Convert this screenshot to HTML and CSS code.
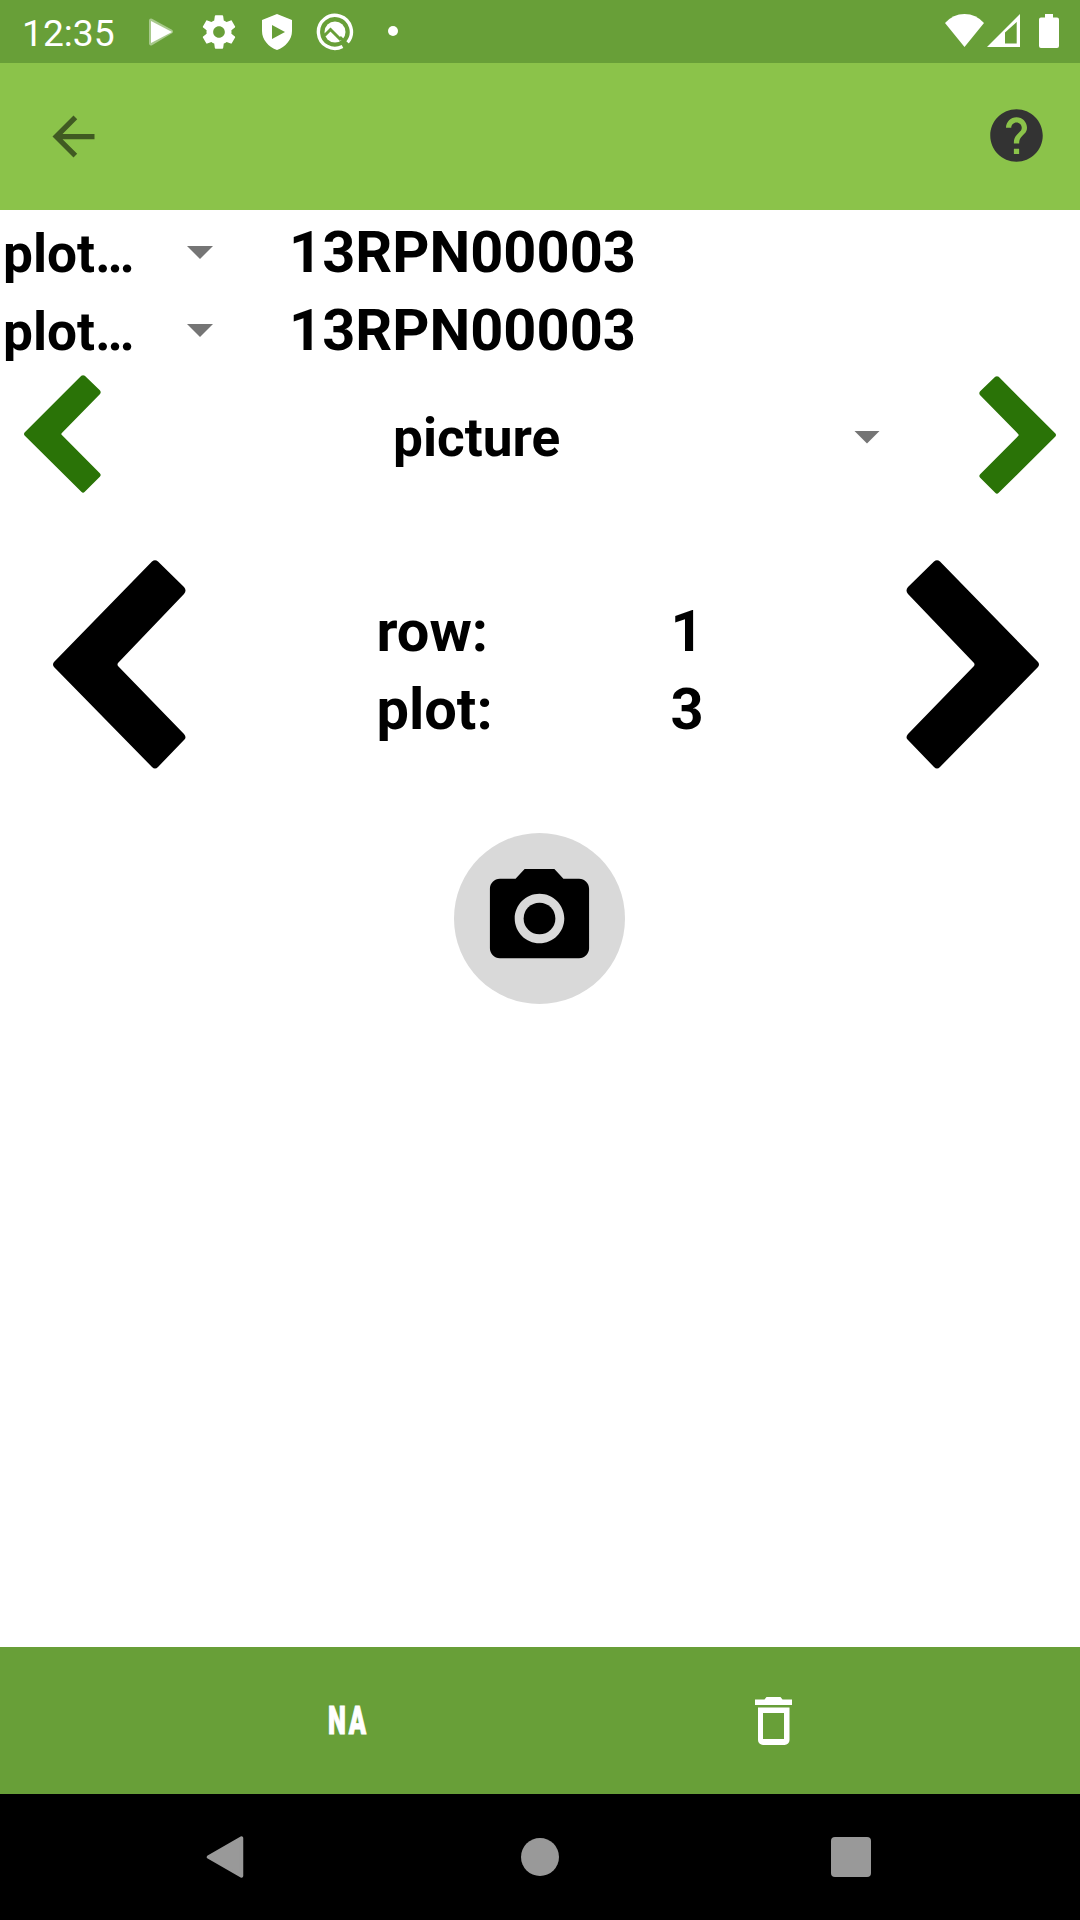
FILE: index.html
```html
<!DOCTYPE html>
<html lang="en">
<head>
<meta charset="utf-8">
<title>Collect</title>
<link rel="stylesheet" href="styles.css">
</head>
<body>
<div class="screen">
  <header class="status">
    <span class="clock">12:35</span>
    <svg class="st-play" width="26" height="30" viewBox="0 0 26 30"><path d="M3 3.500 23 14.500 3 26.500z" fill="#a8c98c" stroke="#a8c98c" stroke-width="4" stroke-linejoin="round"/><path d="M3 4 24 15 3 26z" fill="#fff"/></svg>
    <svg class="st-gear" width="40" height="40" viewBox="0 0 24 24" fill="#fff"><path d="M19.430 12.980c.04-.32.07-.64.07-.98s-.03-.66-.07-.98l2.110-1.650c.19-.15.24-.42.12-.64l-2-3.460c-.12-.22-.39-.3-.61-.22l-2.490 1c-.52-.4-1.080-.73-1.690-.98l-.38-2.650C14.460 2.180 14.250 2 14 2h-4c-.25 0-.46.18-.49.42l-.38 2.650c-.61.25-1.170.59-1.690.98l-2.490-1c-.23-.09-.49 0-.61.22l-2 3.460c-.13.22-.07.49.12.64l2.110 1.650c-.04.32-.07.65-.07.98s.03.66.07.98l-2.110 1.650c-.19.15-.24.42-.12.64l2 3.460c.12.22.39.3.61.22l2.490-1c.52.4 1.080.73 1.690.98l.38 2.650c.03.24.24.42.49.42h4c.25 0 .46-.18.49-.42l.38-2.650c.61-.25 1.170-.59 1.690-.98l2.490 1c.23.09.49 0 .61-.22l2-3.460c.12-.22.07-.49-.12-.64l-2.110-1.650zM12 15.500c-1.930 0-3.500-1.570-3.500-3.500s1.570-3.500 3.500-3.500 3.500 1.570 3.500 3.500-1.570 3.500-3.500 3.500z"/></svg>
    <svg class="st-shield" width="30" height="36" viewBox="0 0 30 36"><path fill="#fff" fill-rule="evenodd" d="M15 0 30 6v11c0 8.500-6.500 16-15 19C6.500 33 0 25.500 0 17V6zM10 11v14l13-7z"/></svg>
    <svg class="st-q" width="38" height="38" viewBox="0 0 38 38" fill="none"><path d="M26.500 33.500A16.500 16.500 0 1 1 31.500 29.500" stroke="#fff" stroke-width="3.400"/><circle cx="19" cy="19" r="10.500" fill="#fff"/><path d="M8.500 22.500 14.500 16.500 25 27" stroke="#689f38" stroke-width="3"/><path d="M24 24 34 34" stroke="#689f38" stroke-width="2.500"/></svg>
    <span class="dot"></span>
    <svg class="st-wifi" width="39" height="33" viewBox="0 0 39 33"><path fill="#fff" d="M0 9Q8 0 19.500 0T39 9L19.500 33z"/></svg>
    <svg class="st-signal" width="33" height="33" viewBox="0 0 33 33"><path fill="#fff" fill-rule="evenodd" d="M33 0v33H0zM18 18.500V29.500H29.700V8z"/></svg>
    <svg class="st-batt" width="20" height="34" viewBox="0 0 20 34"><path fill="#fff" d="M6 0h8v3.500h4a2 2 0 0 1 2 2V32a2 2 0 0 1-2 2H2a2 2 0 0 1-2-2V5.500a2 2 0 0 1 2-2h4z"/></svg>
  </header>
  <nav class="appbar">
    <svg width="63" height="63" viewBox="0 0 24 24" fill="#405a22"><path d="M20 11H7.830l5.590-5.590L12 4l-8 8 8 8 1.410-1.410L7.830 13H20v-2z"/></svg>
    <svg class="help" width="63" height="63" viewBox="0 0 24 24" fill="#333"><path d="M12 2C6.480 2 2 6.480 2 12s4.480 10 10 10 10-4.480 10-10S17.520 2 12 2zm1 17h-2v-2h2v2zm2.070-7.750l-.9.92C13.450 12.900 13 13.500 13 15h-2v-.5c0-1.100.45-2.100 1.170-2.830l1.240-1.260c.37-.36.59-.86.59-1.410 0-1.100-.9-2-2-2s-2 .9-2 2H8c0-2.210 1.790-4 4-4s4 1.790 4 4c0 .88-.36 1.680-.93 2.250z"/></svg>
  </nav>
  <main class="content">
    <div class="info"><span class="label">plot…</span><i class="caret"></i><span class="value">13RPN00003</span></div>
    <div class="info"><span class="label">plot…</span><i class="caret"></i><span class="value">13RPN00003</span></div>
    <div class="trait">
      <svg class="chev" width="77" height="118" viewBox="0 0 133 209" preserveAspectRatio="none"><use href="#chevron"/></svg>
      <span class="trait-name">picture</span><i class="caret"></i>
      <svg class="chev chev-next" width="77" height="118" viewBox="0 0 133 209" preserveAspectRatio="none"><use href="#chevron"/></svg>
    </div>
    <div class="plots">
      <svg width="133" height="209" viewBox="0 0 133 209"><defs><path id="chevron" d="M99 1.500Q102 -1 105 1.500L131 27Q134 30.500 131 34L65 103Q64 104.500 65 106L131 174Q134 177.500 131 180L105 207Q102 210 99 207L1 107Q-1 104.500 1 102z"/></defs><use href="#chevron"/></svg>
      <dl class="coords"><dt>row:</dt><dd>1</dd><dt>plot:</dt><dd>3</dd></dl>
      <svg class="flip" width="133" height="209" viewBox="0 0 133 209"><use href="#chevron"/></svg>
    </div>
    <div class="camera"><svg width="119" height="119" viewBox="0 0 24 24"><circle cx="12" cy="12" r="3.200"/><path d="M9 2L7.170 4H4c-1.100 0-2 .9-2 2v12c0 1.100.9 2 2 2h16c1.100 0 2-.9 2-2V6c0-1.100-.9-2-2-2h-3.170L15 2H9zm3 15c-2.760 0-5-2.240-5-5s2.240-5 5-5 5 2.240 5 5-2.240 5-5 5z"/></svg></div>
  </main>
  <footer class="tools">
    <span class="na">NA</span>
    <svg width="37" height="48" viewBox="0 0 37 48"><path fill="#fff" fill-rule="evenodd" d="M0 2.500h9.500L11.500 0h14l2 2.500H37V8H0zM3 10.500h31.500V43a5 5 0 0 1-5 5H8a5 5 0 0 1-5-5zM8 16v26h21V16z"/></svg>
  </footer>
  <div class="sysnav">
    <svg width="38" height="42" viewBox="0 0 38 42"><path d="M35.500 2v38L2.500 21z" fill="#999" stroke="#999" stroke-width="3.500" stroke-linejoin="round"/></svg>
    <span class="home"></span>
    <span class="recent"></span>
  </div>
</div>
</body>
</html>
```
FILE: styles.css
```css
* { box-sizing: border-box; }
body { margin: 0; background: #fff; color: #000; font-family: Roboto, "Liberation Sans", sans-serif; }
svg { display: block; flex: none; }
.screen { width: 1080px; height: 1920px; display: flex; flex-direction: column; overflow: hidden; }

.status { height: 63px; flex: none; display: flex; align-items: flex-start; background: #689f38; padding-left: 22px; }
.clock { width: 126px; font-size: 37.2px; line-height: 67px; color: #fff; }
.st-play { margin: 17px 0 0 0; }
.st-gear { margin: 12px 0 0 25px; }
.st-shield { margin: 14px 0 0 23px; }
.st-q { margin: 12.500px 0 0 24px; }
.dot { width: 10px; height: 10px; border-radius: 50%; background: #fff; margin: 26px 0 0 34px; }
.st-wifi { margin: 14px 0 0 auto; }
.st-signal { margin: 14px 0 0 3px; }
.st-batt { margin: 14px 21px 0 19px; }

.appbar { height: 147px; flex: none; display: flex; align-items: center; justify-content: space-between; background: #8bc34a; padding: 0 32px 0 42px; }
.help { margin-bottom: 2px; }

.content { flex: 1; padding-top: 3px; font-weight: 700; }
.info { height: 78px; display: flex; align-items: center; font-size: 57.75px; line-height: 78px; }
.label { width: 185px; padding: 3px 0 0 3px; font-size: 53.2px; line-height: 78px; }
.caret { flex: none; width: 26px; height: 13px; margin: 1px 0 0 2px; background: #757575; clip-path: polygon(0 0, 100% 0, 50% 100%); }
.value { margin: -1px 0 0 76px; }

.trait { height: 135px; display: flex; align-items: center; padding: 0 24px; }
.chev { fill: #2a7307; margin-bottom: 5px; }
.chev-next { transform: scaleX(-1); margin: 0 0 3px 99px; }
.trait-name { flex: 1; padding: 3px 0 0 292px; font-size: 53.2px; line-height: 60px; }

.plots { height: 321px; display: flex; align-items: center; justify-content: space-between; padding: 0 41px 0 53px; }
.flip { transform: scaleX(-1); }
.coords { display: grid; grid-template-columns: 294px 235px; grid-auto-rows: 78px; margin: 10px 0 0 190px; width: 529px; font-size: 57.75px; line-height: 78px; }
.coords dd { margin: 0; }

.camera { width: 171px; height: 171px; margin: 8px auto 0 454px; border-radius: 50%; background: #d9d9d9; display: flex; align-items: center; justify-content: center; }

.tools { height: 147px; flex: none; display: flex; align-items: center; background: #689f38; padding-left: 328px; }
.na { width: 427px; color: #fff; font-size: 38px; font-weight: 900; line-height: 44px; letter-spacing: 4px; transform: scaleX(.67); transform-origin: left; -webkit-text-stroke: 1px #fff; }

.sysnav { height: 126px; flex: none; display: flex; align-items: center; background: #000; padding-left: 206px; }
.home { width: 38px; height: 38px; margin-left: 277px; border-radius: 50%; background: #999; }
.recent { width: 40px; height: 40px; margin-left: 272px; border-radius: 4px; background: #999; }
```
